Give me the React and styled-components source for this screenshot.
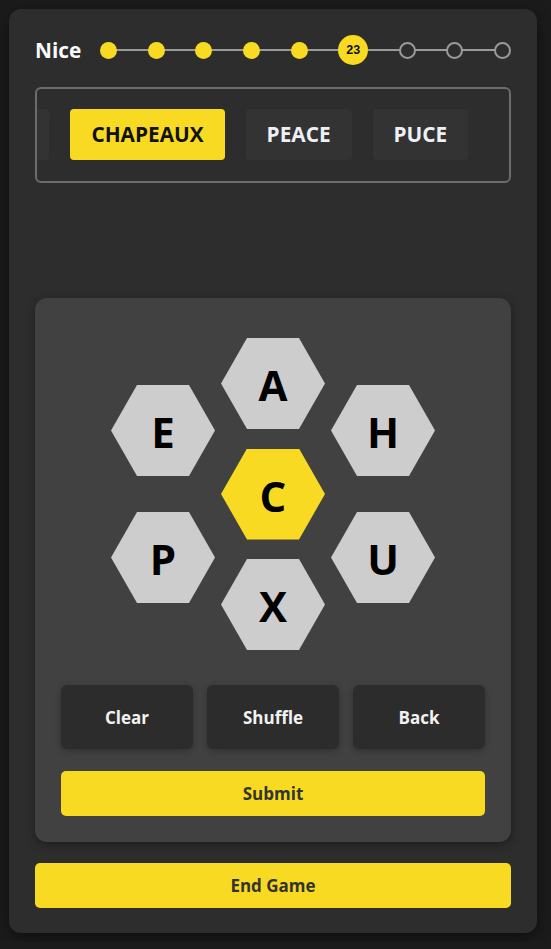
import React, { useLayoutEffect, useRef } from "react";
import styled, { createGlobalStyle } from "styled-components";

const YELLOW = "#f8da22";

const GlobalStyle = createGlobalStyle`
  html, body {
    margin: 0;
    padding: 0;
    background: #1b1b1b;
    font-family: "Open Sans", "Liberation Sans", sans-serif;
  }
`;

const Card = styled.div`
  margin: 9px;
  width: 528px;
  box-sizing: border-box;
  padding: 26px 26px 25px;
  background: #2d2d2d;
  border-radius: 12px;
  box-shadow: 0 4px 14px rgba(0, 0, 0, 0.45);
  display: flex;
  flex-direction: column;
  gap: 22px;
`;

const ProgressRow = styled.div`
  display: flex;
  align-items: center;
  height: 30px;
  gap: 19px;
`;

const Rank = styled.span`
  color: #fafafa;
  font-size: 20.8px;
  font-weight: 700;
  line-height: 1;
`;

const Track = styled.div`
  flex: 1;
  position: relative;
  display: flex;
  justify-content: space-between;
  align-items: center;

  &::before {
    content: "";
    position: absolute;
    left: 8px;
    right: 8px;
    top: 50%;
    height: 2px;
    margin-top: -1px;
    background: #9a9a9a;
  }
`;

const Dot = styled.div`
  position: relative;
  box-sizing: border-box;
  width: ${p => (p.$current ? 30 : 17)}px;
  height: ${p => (p.$current ? 30 : 17)}px;
  border-radius: 50%;
  background: ${p => (p.$done || p.$current ? YELLOW : "#2d2d2d")};
  border: ${p => (p.$done || p.$current ? "none" : "2px solid #9a9a9a")};
  display: flex;
  align-items: center;
  justify-content: center;
  font-family: "Liberation Sans", Arial, sans-serif;
  font-size: 12.5px;
  font-weight: 700;
  color: #111;
`;

const WordBox = styled.div`
  border: 2px solid #6c6c6c;
  border-radius: 6px;
  overflow: hidden;
`;

const WordScroll = styled.div`
  position: relative;
  display: flex;
  gap: 21px;
  padding: 20px 80px 21px 0;
  overflow-x: auto;
  scrollbar-width: none;

  &::-webkit-scrollbar {
    display: none;
  }
`;

const Word = styled.div`
  flex: none;
  height: 51px;
  padding: 0 21px;
  display: flex;
  align-items: center;
  border-radius: 4px;
  background: ${p => (p.$active ? YELLOW : "#333333")};
  color: ${p => (p.$active ? "#111" : "#eef0f6")};
  font-size: 20.8px;
  font-weight: 700;
  line-height: 1;
  padding-bottom: 1px;
  box-sizing: border-box;
`;

const Message = styled.div`
  height: 71px;
`;

const Panel = styled.div`
  background: #414141;
  border-radius: 12px;
  padding: 40px 26px 26px;
  margin-bottom: -1px;
  box-shadow: 0 3px 10px rgba(0, 0, 0, 0.35);
`;

const Board = styled.div`
  display: flex;
  justify-content: center;
  align-items: center;
  gap: 6px;
  margin-bottom: 35px;
`;

const HexColumn = styled.div`
  display: flex;
  flex-direction: column;
  gap: ${p => p.$gap}px;
`;

const Hex = styled.div`
  width: 104px;
  height: 91px;
  clip-path: polygon(25% 0, 75% 0, 100% 50%, 75% 100%, 25% 100%, 0 50%);
  background: ${p => (p.$center ? YELLOW : "#cdcdcd")};
  display: flex;
  align-items: center;
  justify-content: center;
  color: #000;
  font-size: 42px;
  font-weight: 700;
  line-height: 1;
  padding-top: 3px;
  box-sizing: border-box;
`;

const Controls = styled.div`
  display: grid;
  grid-template-columns: repeat(3, 1fr);
  gap: 14px;
  margin-bottom: 22px;
`;

const ControlButton = styled.button`
  height: 64px;
  border: none;
  border-radius: 6px;
  background: #2c2c2c;
  color: #f2f2f2;
  font-family: "Open Sans", sans-serif;
  font-size: 17px;
  font-weight: 700;
  box-shadow: 0 2px 6px rgba(0, 0, 0, 0.25);
`;

const YellowButton = styled.button`
  width: 100%;
  height: 45px;
  border: none;
  border-radius: 5px;
  background: ${YELLOW};
  color: #333;
  font-family: "Open Sans", sans-serif;
  font-size: 17px;
  font-weight: 700;
`;

const words = ["CACHE", "CHAPEAUX", "PEACE", "PUCE"];
const selected = "CHAPEAUX";

export default function App() {
  const scrollRef = useRef(null);
  const activeRef = useRef(null);

  useLayoutEffect(() => {
    if (scrollRef.current && activeRef.current) {
      scrollRef.current.scrollLeft = activeRef.current.offsetLeft - 33;
    }
  }, []);

  const steps = Array.from({ length: 9 }, (_, i) => i);

  return (
    <>
      <GlobalStyle />
      <Card>
        <ProgressRow>
          <Rank>Nice</Rank>
          <Track>
            {steps.map(i => (
              <Dot key={i} $done={i < 5} $current={i === 5}>
                {i === 5 ? "23" : null}
              </Dot>
            ))}
          </Track>
        </ProgressRow>

        <WordBox>
          <WordScroll ref={scrollRef}>
            {words.map(w => (
              <Word key={w} $active={w === selected} ref={w === selected ? activeRef : null}>
                {w}
              </Word>
            ))}
          </WordScroll>
        </WordBox>

        <Message />

        <Panel>
          <Board>
            <HexColumn $gap={36}>
              <Hex>E</Hex>
              <Hex>P</Hex>
            </HexColumn>
            <HexColumn $gap={19.5}>
              <Hex>A</Hex>
              <Hex $center>C</Hex>
              <Hex>X</Hex>
            </HexColumn>
            <HexColumn $gap={36}>
              <Hex>H</Hex>
              <Hex>U</Hex>
            </HexColumn>
          </Board>
          <Controls>
            <ControlButton>Clear</ControlButton>
            <ControlButton>Shuffle</ControlButton>
            <ControlButton>Back</ControlButton>
          </Controls>
          <YellowButton>Submit</YellowButton>
        </Panel>

        <YellowButton>End Game</YellowButton>
      </Card>
    </>
  );
}
